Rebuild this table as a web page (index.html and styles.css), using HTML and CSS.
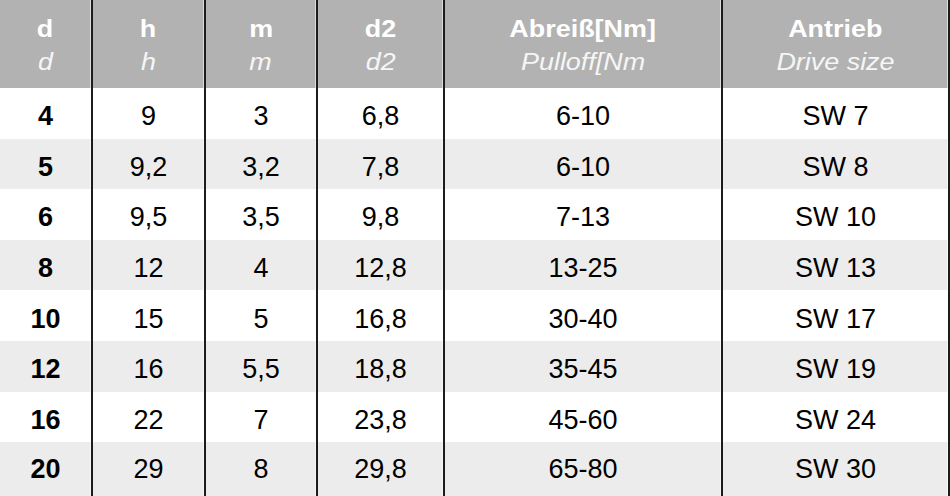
FILE: index.html
```html
<!DOCTYPE html>
<html lang="de">
<head>
<meta charset="utf-8">
<title>Abreißmuttern</title>
<link rel="stylesheet" href="styles.css">
</head>
<body>
<div class="table">
  <div class="row head">
    <div class="cell"><span class="de">d</span><span class="en">d</span></div>
    <div class="cell"><span class="de">h</span><span class="en">h</span></div>
    <div class="cell"><span class="de">m</span><span class="en">m</span></div>
    <div class="cell"><span class="de">d2</span><span class="en">d2</span></div>
    <div class="cell"><span class="de">Abreiß[Nm]</span><span class="en">Pulloff[Nm</span></div>
    <div class="cell"><span class="de">Antrieb</span><span class="en">Drive size</span></div>
  </div>
  <div class="row"><div class="cell key">4</div><div class="cell">9</div><div class="cell">3</div><div class="cell">6,8</div><div class="cell">6-10</div><div class="cell">SW 7</div></div>
  <div class="row alt"><div class="cell key">5</div><div class="cell">9,2</div><div class="cell">3,2</div><div class="cell">7,8</div><div class="cell">6-10</div><div class="cell">SW 8</div></div>
  <div class="row"><div class="cell key">6</div><div class="cell">9,5</div><div class="cell">3,5</div><div class="cell">9,8</div><div class="cell">7-13</div><div class="cell">SW 10</div></div>
  <div class="row alt"><div class="cell key">8</div><div class="cell">12</div><div class="cell">4</div><div class="cell">12,8</div><div class="cell">13-25</div><div class="cell">SW 13</div></div>
  <div class="row"><div class="cell key">10</div><div class="cell">15</div><div class="cell">5</div><div class="cell">16,8</div><div class="cell">30-40</div><div class="cell">SW 17</div></div>
  <div class="row alt"><div class="cell key">12</div><div class="cell">16</div><div class="cell">5,5</div><div class="cell">18,8</div><div class="cell">35-45</div><div class="cell">SW 19</div></div>
  <div class="row"><div class="cell key">16</div><div class="cell">22</div><div class="cell">7</div><div class="cell">23,8</div><div class="cell">45-60</div><div class="cell">SW 24</div></div>
  <div class="row alt last"><div class="cell key">20</div><div class="cell">29</div><div class="cell">8</div><div class="cell">29,8</div><div class="cell">65-80</div><div class="cell">SW 30</div></div>
</div>
</body>
</html>
```

FILE: styles.css
```css
html, body {
  margin: 0;
  padding: 0;
  background: #ffffff;
}

body {
  width: 950px;
  height: 496px;
  overflow: hidden;
  font-family: "Liberation Sans", Arial, sans-serif;
  color: #000;
}

.table {
  display: flex;
  flex-direction: column;
  height: 496px;
}

.row {
  display: grid;
  grid-template-columns: 93px 113px 112px 127px 278px 227px;
  height: 50.6px;
  flex: none;
  background: #ffffff;
}

.row.last {
  flex: 1 1 auto;
  padding-bottom: 0;
}

.row.alt {
  background: #ececec;
}

.row.head {
  height: 88px;
  background: #b2b2b2;
}

.cell {
  box-sizing: border-box;
  border-right: 2px solid #1c1c1c;
  box-shadow: inset -1px 0 0 rgba(255, 255, 255, 0.55);
  display: flex;
  align-items: center;
  justify-content: center;
  padding-top: 6px;
  font-size: 27px;
  line-height: 30px;
}

.row.last .cell {
  align-items: flex-start;
  padding-top: 12px;
}

.cell.key {
  font-weight: bold;
}

.head .cell {
  flex-direction: column;
  justify-content: flex-start;
  padding-top: 13px;
  color: #ffffff;
  font-size: 23px;
  line-height: 33px;
}

.de,
.en {
  display: block;
  transform: scaleX(1.17);
  white-space: nowrap;
}

.de {
  font-weight: bold;
}

.en {
  font-style: italic;
  color: #f6f6f6;
}
```
